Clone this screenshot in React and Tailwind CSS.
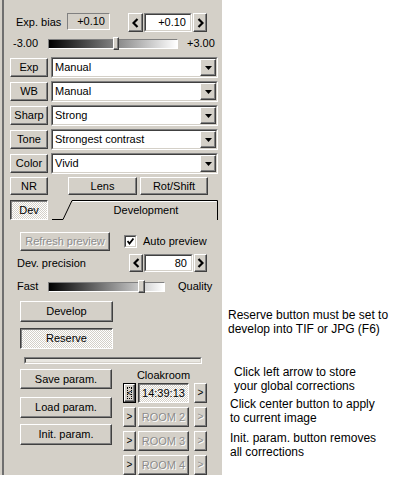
import clsx from 'clsx';

const raised =
  'border border-t-white border-l-white border-r-[#404040] border-b-[#404040] shadow-[inset_-1px_-1px_0_#808080] bg-[#d4d0c8]';
const pressed =
  'border border-t-[#404040] border-l-[#404040] border-r-white border-b-white shadow-[inset_1px_1px_0_#808080] bg-[repeating-conic-gradient(#ffffff_0%_25%,#d4d0c8_0%_50%)] bg-[length:2px_2px]';
const sunken =
  'border border-t-[#808080] border-l-[#808080] border-r-white border-b-white';
const disabledText = 'text-[#8c8c8c] [text-shadow:1px_1px_0_#ffffff]';

function Btn({ className, children, down, disabled }) {
  return (
    <div
      className={clsx(
        'flex items-center justify-center shrink-0 leading-none',
        down ? pressed : raised,
        disabled && disabledText,
        className
      )}
    >
      {children}
    </div>
  );
}

function Chevron({ dir }) {
  return (
    <svg width="7" height="10" viewBox="0 0 7 10">
      <polyline
        points={dir === 'left' ? '5.5,1 1.5,5 5.5,9' : '1.5,1 5.5,5 1.5,9'}
        fill="none"
        stroke="#000"
        strokeWidth="2.2"
      />
    </svg>
  );
}

function Field({ className, children }) {
  return (
    <div className={clsx('shrink-0', sunken, className)}>
      <div className="h-full border border-t-[#404040] border-l-[#404040] border-r-[#d4d0c8] border-b-[#d4d0c8] bg-white flex items-center justify-end pr-[4px] leading-none">
        {children}
      </div>
    </div>
  );
}

function Combo({ label, value, first }) {
  return (
    <div className={clsx('h-[21px] flex items-center', first ? 'mt-[7px]' : 'mt-[3px]')}>
      <Btn className="ml-[6px] w-[38px] h-[19px]">{label}</Btn>
      <div className={clsx('ml-[3px] w-[167px] h-[21px]', sunken)}>
        <div className="h-full flex items-center border border-t-[#404040] border-l-[#404040] border-r-[#d4d0c8] border-b-[#d4d0c8] bg-white">
          <span className="flex-1 pl-[2px] leading-none">{value}</span>
          <Btn className="w-[16px] h-full">
            <svg width="7" height="4" viewBox="0 0 7 4">
              <polygon points="0,0 7,0 3.5,4" fill="#000" />
            </svg>
          </Btn>
        </div>
      </div>
    </div>
  );
}

function Slider({ className, thumb, thumbW }) {
  return (
    <div className={clsx('relative shrink-0 h-[13px] flex items-center', className)}>
      <div className={clsx('w-full h-[10px]', sunken)}>
        <div className="h-full bg-[linear-gradient(to_right,#000000,#ffffff)]" />
      </div>
      <div
        className={clsx('absolute top-0 h-[13px]', raised)}
        style={{ left: thumb, width: thumbW }}
      />
    </div>
  );
}

function RoomRow({ children, active, room, first }) {
  return (
    <div className={clsx('h-[20px] flex', first ? 'mt-[2px]' : 'mt-[4px]')}>
      {active ? (
        <div className="w-[13px] h-[20px] border border-black shrink-0">
          <div className={clsx('h-full flex items-center justify-center p-[2px]', raised)}>
            <div className="w-full h-full border border-dotted border-black flex items-center justify-center text-[9px] leading-none">
              &lt;
            </div>
          </div>
        </div>
      ) : (
        <Btn className="w-[13px] h-[20px] text-[10px]">&gt;</Btn>
      )}
      {active ? (
        <Btn down className="ml-[2px] w-[51px] h-[20px]">
          {room}
        </Btn>
      ) : (
        <Btn disabled className="ml-[2px] w-[51px] h-[20px]">
          {room}
        </Btn>
      )}
      <Btn disabled={!active} className="ml-[5px] w-[13px] h-[20px] text-[10px]">
        &gt;
      </Btn>
    </div>
  );
}

export default function App() {
  return (
    <div className="w-[394px] h-[488px] bg-white flex font-['Liberation_Sans',Arial,sans-serif] text-black">
      {/* Panel */}
      <div className="w-[222px] h-[475px] bg-[#d4d0c8] pl-[2px] text-[11px]">
        <div className="h-full border-l-2 border-[#6f6f6f] flex flex-col">
          {/* Exp bias */}
          <div className="mt-[13px] h-[19px] flex items-start">
            <span className="ml-[12px] w-[51px] leading-[19px]">Exp. bias</span>
            <div className={clsx('w-[43px] h-[17px] flex items-center justify-end pr-[4px] leading-none', sunken)}>
              +0.10
            </div>
            <Btn className="ml-[18px] w-[15px] h-[19px]">
              <Chevron dir="left" />
            </Btn>
            <Field className="ml-[1px] w-[48px] h-[19px]">+0.10</Field>
            <Btn className="ml-[1px] w-[14px] h-[19px]">
              <Chevron dir="right" />
            </Btn>
          </div>

          <div className="mt-[5px] h-[13px] flex items-center">
            <span className="ml-[9px] w-[35px] leading-none">-3.00</span>
            <Slider className="w-[130px]" thumb={65} thumbW={6} />
            <span className="ml-[9px] leading-none">+3.00</span>
          </div>

          <Combo first label="Exp" value="Manual" />
          <Combo label="WB" value="Manual" />
          <Combo label="Sharp" value="Strong" />
          <Combo label="Tone" value="Strongest contrast" />
          <Combo label="Color" value="Vivid" />

          <div className="mt-[3px] h-[18px] flex">
            <Btn className="ml-[6px] w-[38px] h-[18px]">NR</Btn>
            <Btn className="ml-[20px] w-[69px] h-[18px]">Lens</Btn>
            <Btn className="ml-[3px] w-[68px] h-[18px]">Rot/Shift</Btn>
          </div>

          {/* Tabs */}
          <div className="mt-[5px] h-[20px] flex">
            <Btn down className="ml-[6px] w-[38px] h-[20px]">Dev</Btn>
            <div className="relative ml-[4px] w-[166px] h-[20px] flex items-center justify-center pl-[22px] leading-none">
              <svg className="absolute inset-0" width="166" height="20" viewBox="0 0 166 20">
                <polyline
                  points="0,19.5 11,19.5 20,0.5 165.5,0.5 165.5,20"
                  fill="none"
                  stroke="#000"
                  strokeWidth="1"
                />
                <polyline
                  points="21,1.5 164.5,1.5"
                  fill="none"
                  stroke="#ffffff"
                  strokeWidth="1"
                />
              </svg>
              <span className="relative">Development</span>
            </div>
          </div>

          {/* Preview */}
          <div className="mt-[12px] h-[19px] flex items-center">
            <Btn disabled className="ml-[16px] w-[90px] h-[19px]">Refresh preview</Btn>
            <div className={clsx('ml-[14px] w-[13px] h-[13px] shrink-0', sunken)}>
              <div className="h-full border border-t-[#404040] border-l-[#404040] border-r-[#d4d0c8] border-b-[#d4d0c8] bg-white flex items-center justify-center">
                <svg width="7" height="7" viewBox="0 0 7 7">
                  <polyline points="0.5,3 2.5,5.5 6.5,0.5" fill="none" stroke="#000" strokeWidth="1.8" />
                </svg>
              </div>
            </div>
            <span className="ml-[6px] leading-none">Auto preview</span>
          </div>

          <div className="mt-[3px] h-[18px] flex items-center">
            <span className="ml-[13px] w-[112px] leading-none">Dev. precision</span>
            <Btn className="w-[14px] h-[18px]">
              <Chevron dir="left" />
            </Btn>
            <Field className="ml-[1px] w-[49px] h-[18px]">80</Field>
            <Btn className="ml-[1px] w-[13px] h-[18px]">
              <Chevron dir="right" />
            </Btn>
          </div>

          <div className="mt-[8px] h-[13px] flex items-center">
            <span className="ml-[13px] w-[31px] leading-none">Fast</span>
            <Slider className="w-[117px]" thumb={90} thumbW={7} />
            <span className="ml-[13px] leading-none">Quality</span>
          </div>

          <Btn className="mt-[8px] ml-[16px] w-[93px] h-[21px]">Develop</Btn>
          <Btn down className="mt-[6px] ml-[16px] w-[93px] h-[21px]">Reserve</Btn>

          <div className={clsx('mt-[8px] ml-[20px] w-[178px] h-[7px]', sunken)}>
            <div className="h-full border border-t-[#404040] border-l-[#404040] border-r-[#d4d0c8] border-b-[#d4d0c8] bg-[#e8e6e0]" />
          </div>

          {/* Params + cloakroom */}
          <div className="mt-[1px] flex">
            <div className="ml-[16px] w-[92px] flex flex-col">
              <Btn className="mt-[4px] w-[92px] h-[20px]">Save param.</Btn>
              <Btn className="mt-[8px] w-[92px] h-[21px]">Load param.</Btn>
              <Btn className="mt-[6px] w-[92px] h-[21px]">Init. param.</Btn>
            </div>
            <div className="ml-[11px] w-[84px] flex flex-col">
              <div className="h-[16px] pl-[15px] w-[66px] flex items-end justify-center leading-none">
                Cloakroom
              </div>
              <RoomRow first active room="14:39:13" />
              <RoomRow room="ROOM 2" />
              <RoomRow room="ROOM 3" />
              <RoomRow room="ROOM 4" />
            </div>
          </div>
        </div>
      </div>

      {/* Notes */}
      <div className="flex flex-col text-[12px] leading-[14px]">
        <p className="mt-[308px] pl-[6px]">
          Reserve button must be set to
          <br />
          develop into TIF or JPG (F6)
        </p>
        <p className="mt-[29px] pl-[12px]">
          Click left arrow to store
          <br />
          your global corrections
        </p>
        <p className="mt-[4px] pl-[8px]">
          Click center button to apply
          <br />
          to current image
        </p>
        <p className="mt-[6px] pl-[8px]">
          Init. param. button removes
          <br />
          all corrections
        </p>
      </div>
    </div>
  );
}
